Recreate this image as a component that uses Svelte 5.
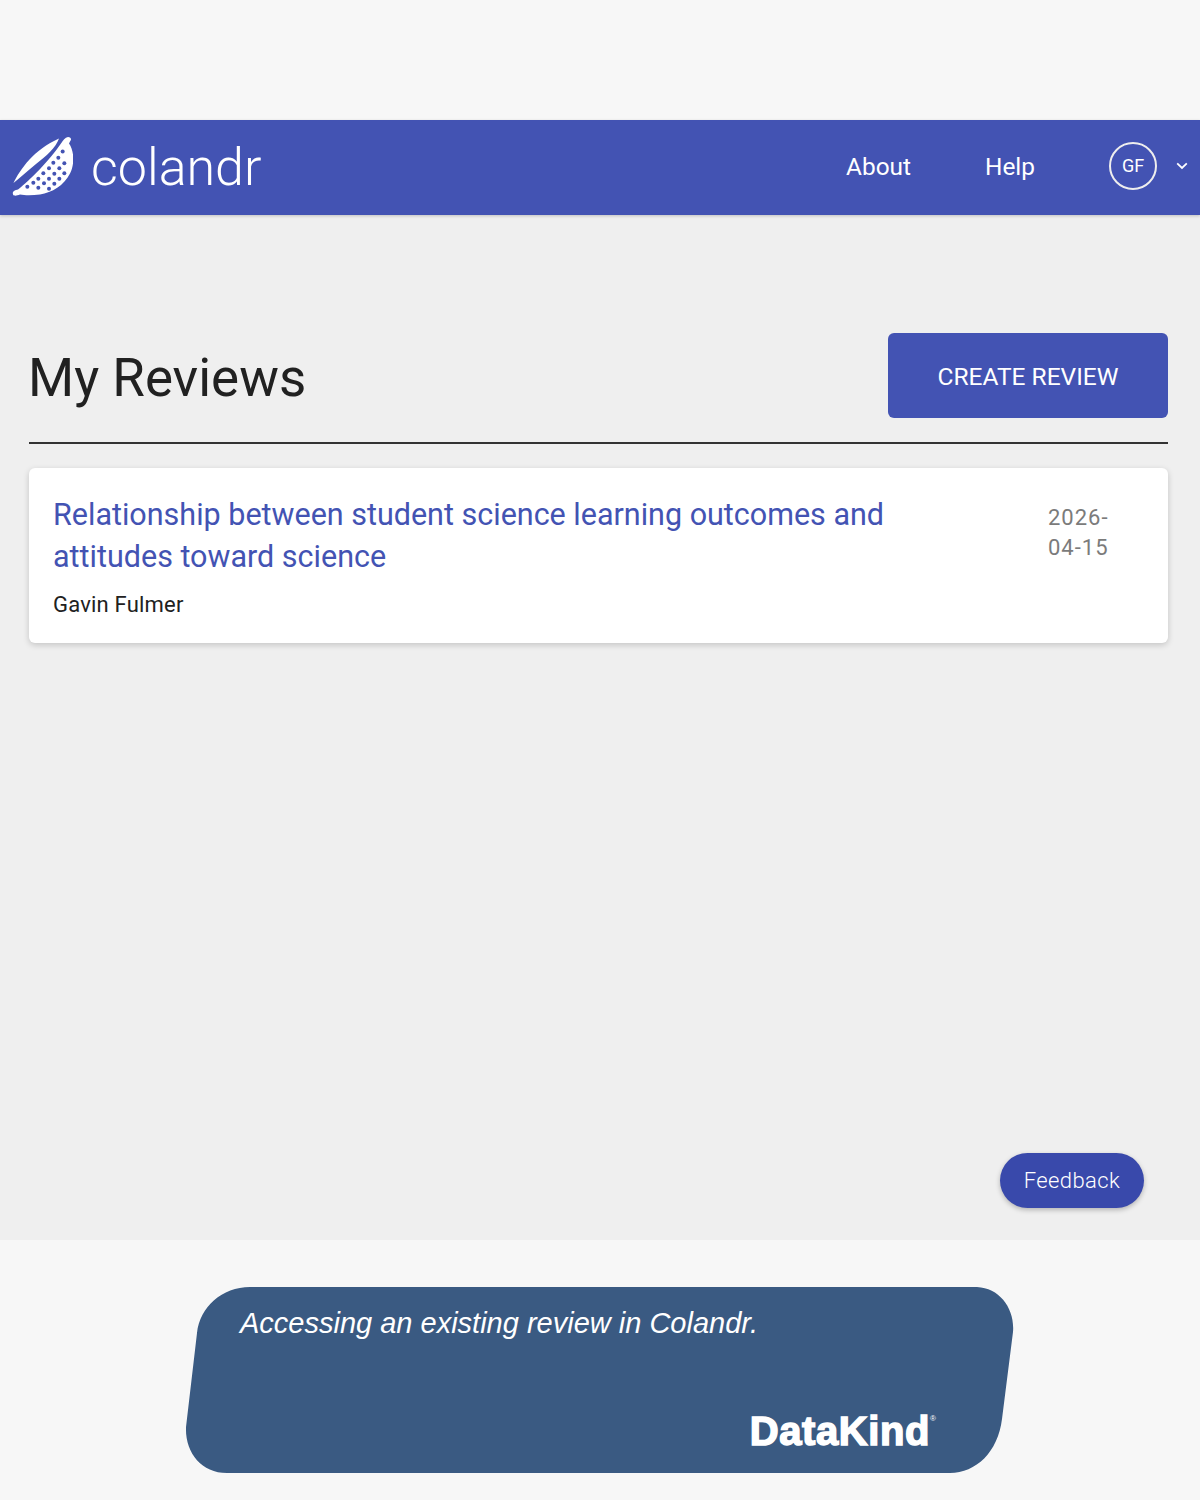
<script>
	let reviews = [
		{
			title: 'Relationship between student science learning outcomes and attitudes toward science',
			owner: 'Gavin Fulmer',
			date: '2026-04-15'
		}
	]

	// strainer holes
	let holes = [[188,78],[175,97],[193,113],[160,112],[147,128],[178,128],[130,143],[163,145],[193,143],[115,160],[147,160],[178,160],[100,172],[132,173],[163,175],[82,184],[115,187],[147,190]]
</script>

<div class="page">
	<div class="topbar"></div>

	<header>
		<a class="brand" href="#home">
			<svg class="logo" viewBox="11 11.5 62 62" width="62" height="62">
				<path d="M13.5 57.5 C20 44 34 24 59 13 C56 22 46 31 36 38.5 C28 45 20 52 13.5 57.5 Z" fill="#fff" />
				<path d="M61 18 C63 15 65 12 68 11.5 C71 11.5 72 14 70 16 L69 18 C74 25 75 38 70 48 C64 60 52 67 40 69 C32 70 25 70 20 69 C17 70 14 71 13 69 C12 66 15 64.5 18 64 C30 55 50 34 61 18 Z" fill="#fff" />
				<g fill="#4353b3">
					{#each holes as [x, y]}
						<circle cx={x / 3} cy={y / 3} r="2" />
					{/each}
				</g>
			</svg>
			<span>colandr</span>
		</a>
		<nav>
			<a href="#about" class="about">About</a>
			<a href="#help" class="help">Help</a>
			<div class="avatar">GF</div>
			<svg class="chev" viewBox="0 0 12 8" width="12" height="8">
				<path d="M1.2 1.4 L6 6 L10.8 1.4" fill="none" stroke="#fff" stroke-width="1.8" />
			</svg>
		</nav>
	</header>

	<main>
		<div class="title-row">
			<h1>My Reviews</h1>
			<button class="create">CREATE REVIEW</button>
		</div>
		<hr />
		{#each reviews as review}
			<article>
				<div class="info">
					<a href="#review">{review.title}</a>
					<p>{review.owner}</p>
				</div>
				<div class="date">{review.date}</div>
			</article>
		{/each}
		<div class="spacer"></div>
		<button class="feedback">Feedback</button>
	</main>

	<footer>
		<div class="caption">
			<p>Accessing an existing review in Colandr.</p>
			<div class="datakind">DataKind<sup>®</sup></div>
		</div>
	</footer>
</div>

<style>
	:global(body) {
		background: #f7f7f7;
		font-family: Roboto, sans-serif;
	}

	.page {
		height: 1500px;
		display: flex;
		flex-direction: column;
	}

	.topbar {
		height: 120px;
		background: #f7f7f7;
	}

	header {
		height: 95px;
		background: #4353b3;
		display: flex;
		justify-content: space-between;
		align-items: center;
		box-shadow: 0 1px 3px rgba(0, 0, 0, 0.2);
		position: relative;
	}

	a {
		text-decoration: none;
	}

	.brand {
		display: flex;
		align-items: center;
		color: #fff;
		font-size: 52px;
		font-weight: 300;
		padding-left: 11px;
		gap: 18px;
	}

	.logo {
		display: block;
	}

	nav {
		display: flex;
		align-items: center;
		color: #fff;
		padding: 0 12px 4px 0;
	}

	nav a {
		color: #fff;
		padding-top: 1px;
		font-size: 24.4px;
		font-weight: 400;
	}

	.help {
		margin-left: 74px;
	}

	.avatar {
		margin-left: 74px;
		width: 48px;
		height: 48px;
		box-sizing: border-box;
		border: 2px solid #eee;
		border-radius: 50%;
		display: flex;
		align-items: center;
		justify-content: center;
		font-size: 18px;
	}

	.chev {
		margin-left: 19px;
	}

	main {
		flex: 1;
		background: #efefef;
		padding: 118px 32px 32px 29px;
		display: flex;
		flex-direction: column;
	}

	.title-row {
		display: flex;
		justify-content: space-between;
		align-items: center;
		height: 85px;
	}

	h1 {
		margin: 4px 0 0 -1px;
		font-size: 52.9px;
		font-weight: 400;
		color: #212121;
	}

	.create {
		width: 280px;
		height: 85px;
		border: none;
		border-radius: 6px;
		background: #4353b3;
		color: #fff;
		font-family: inherit;
		font-size: 24.5px;
		font-weight: 400;
		padding-top: 2px;
	}

	hr {
		width: 100%;
		margin: 24px 0;
		border: none;
		border-top: 2px solid #333;
	}

	article {
		background: #fff;
		border-radius: 6px;
		box-shadow: 0 2px 6px rgba(0, 0, 0, 0.18);
		padding: 26px 24px 24px;
		display: flex;
		justify-content: space-between;
		height: 175px;
		box-sizing: border-box;
	}

	.info {
		width: 860px;
	}

	.info a {
		color: #4353b3;
		font-size: 30.5px;
		line-height: 42px;
	}

	.info p {
		margin: 14px 0 0;
		font-size: 22px;
		letter-spacing: 0.2px;
		color: #212121;
	}

	.date {
		width: 96px;
		box-sizing: border-box;
		padding: 9px 26px 0 0;
		font-size: 22px;
		line-height: 30px;
		color: #7b7b7b;
		letter-spacing: 1px;
	}

	.spacer {
		flex: 1;
	}

	.feedback {
		align-self: flex-end;
		margin-right: 24px;
		width: 144px;
		height: 55px;
		border: none;
		border-radius: 28px;
		background: #3949ab;
		color: #fff;
		font-family: inherit;
		font-size: 22px;
		font-weight: 300;
		letter-spacing: 0.4px;
		box-shadow: 0 2px 5px rgba(0, 0, 0, 0.25);
	}

	footer {
		height: 260px;
		box-sizing: border-box;
		padding: 47px 0 0 186px;
		background: #f7f7f7;
	}

	.caption {
		width: 828px;
		height: 186px;
		box-sizing: border-box;
		background: #3a5a82;
		clip-path: path('M64 0 L791 0 C814 1 829 22 827 45 L816 132 C812 165 790 186 764 186 L41 186 C15 186 -1 165 0 140 L11 46 C14 20 36 0 64 0 Z');
		padding: 20px 54px 0;
		display: flex;
		flex-direction: column;
		justify-content: space-between;
		color: #fff;
	}

	.caption p {
		margin: 0;
		font-family: 'Liberation Sans', sans-serif;
		font-style: italic;
		font-size: 29px;
	}

	.datakind {
		align-self: flex-end;
		margin: 0 24px 22px 0;
		font-family: 'Liberation Sans', sans-serif;
		font-weight: 700;
		font-size: 40px;
		letter-spacing: 0.6px;
		-webkit-text-stroke: 1.5px #fff;
		line-height: 1;
	}

	.datakind sup {
		font-size: 8px;
		font-weight: 400;
		-webkit-text-stroke: 0;
		vertical-align: 24px;
		letter-spacing: 0;
	}
</style>
